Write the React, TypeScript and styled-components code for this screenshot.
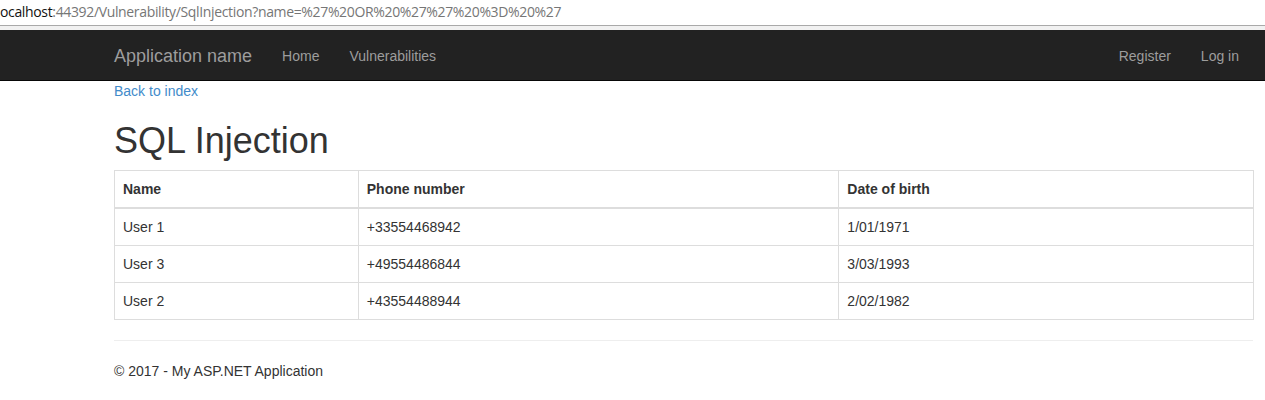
import React from "react";
import styled, { createGlobalStyle } from "styled-components";

const Global = createGlobalStyle`
  html, body { margin: 0; padding: 0; background: #fff; overflow: hidden; }
  body {
    font-family: "Liberation Sans", Arial, Helvetica, sans-serif;
    font-size: 14px;
    line-height: 20px;
    color: #333;
  }
  * { box-sizing: border-box; }
`;

const AddressBar = styled.div`
  height: 30px;
  background: #fff;
  display: flex;
  flex-direction: column;
`;

const AddressText = styled.div`
  height: 25px;
  padding-top: 2px;
  font-family: "Open Sans", "Noto Sans", sans-serif;
  font-size: 14px;
  line-height: 20px;
  color: #767676;
  white-space: nowrap;
  letter-spacing: -0.35px;
`;

const Host = styled.span`
  color: #111;
`;

const AddressEdge = styled.div`
  height: 1px;
  background: #a9a9a9;
`;

const AddressGap = styled.div`
  flex: 1;
  background: #f1f1f1;
`;

const Navbar = styled.nav`
  height: 51px;
  background: #222;
  border-bottom: 1px solid #080808;
`;

const NavContainer = styled.div`
  width: 1155px;
  margin-left: 99px;
  display: flex;
  align-items: stretch;
  height: 50px;
`;

const Brand = styled.a`
  display: block;
  padding: 16px 15px 14px;
  font-size: 18px;
  line-height: 20px;
  color: #9d9d9d;
  text-decoration: none;
`;

const NavList = styled.ul<{ $right?: boolean }>`
  list-style: none;
  margin: 0;
  padding: 0;
  display: flex;
  margin-left: ${(p) => (p.$right ? "auto" : "0")};
`;

const NavLink = styled.a`
  display: block;
  padding: 16px 15px 14px;
  line-height: 20px;
  color: #9d9d9d;
  text-decoration: none;
`;

const Body = styled.main`
  width: 1139px;
  margin-left: 114px;
`;

const BackLink = styled.a`
  color: #428bca;
  text-decoration: none;
`;

const Title = styled.h1`
  font-size: 36px;
  font-weight: 500;
  line-height: 39px;
  margin: 20px 0 10px;
  color: #333;
`;

const Table = styled.table`
  width: 1140px;
  border-collapse: collapse;
  border-spacing: 0;
  border: 1px solid #ddd;
  margin-bottom: 20px;
`;

const Th = styled.th<{ $w: number }>`
  width: ${(p) => p.$w}px;
  text-align: left;
  font-weight: bold;
  padding: 8px;
  line-height: 20px;
  border: 1px solid #ddd;
  border-bottom-width: 2px;
  vertical-align: bottom;
`;

const Td = styled.td`
  padding: 8px;
  line-height: 20px;
  border: 1px solid #ddd;
  vertical-align: top;
`;

const Rule = styled.hr`
  margin: 20px 0;
  border: 0;
  border-top: 1px solid #eee;
`;

const Footer = styled.footer`
  p { margin: 0 0 10px; }
`;

const rows = [
  ["User 1", "+33554468942", "1/01/1971"],
  ["User 3", "+49554486844", "3/03/1993"],
  ["User 2", "+43554488944", "2/02/1982"],
];

export default function App() {
  return (
    <>
      <Global />
      <AddressBar>
        <AddressText>
          <Host>ocalhost</Host>:44392/Vulnerability/SqlInjection?name=%27%20OR%20%27%27%20%3D%20%27
        </AddressText>
        <AddressEdge />
        <AddressGap />
      </AddressBar>
      <Navbar>
        <NavContainer>
          <Brand href="#">Application name</Brand>
          <NavList>
            <li><NavLink href="#">Home</NavLink></li>
            <li><NavLink href="#">Vulnerabilities</NavLink></li>
          </NavList>
          <NavList $right>
            <li><NavLink href="#">Register</NavLink></li>
            <li><NavLink href="#">Log in</NavLink></li>
          </NavList>
        </NavContainer>
      </Navbar>
      <Body>
        <BackLink href="#">Back to index</BackLink>
        <Title>SQL Injection</Title>
        <Table>
          <thead>
            <tr>
              <Th $w={244}>Name</Th>
              <Th $w={481}>Phone number</Th>
              <Th $w={415}>Date of birth</Th>
            </tr>
          </thead>
          <tbody>
            {rows.map((r) => (
              <tr key={r[0]}>
                {r.map((c) => (
                  <Td key={c}>{c}</Td>
                ))}
              </tr>
            ))}
          </tbody>
        </Table>
        <Rule />
        <Footer>
          <p>© 2017 - My ASP.NET Application</p>
        </Footer>
      </Body>
    </>
  );
}
